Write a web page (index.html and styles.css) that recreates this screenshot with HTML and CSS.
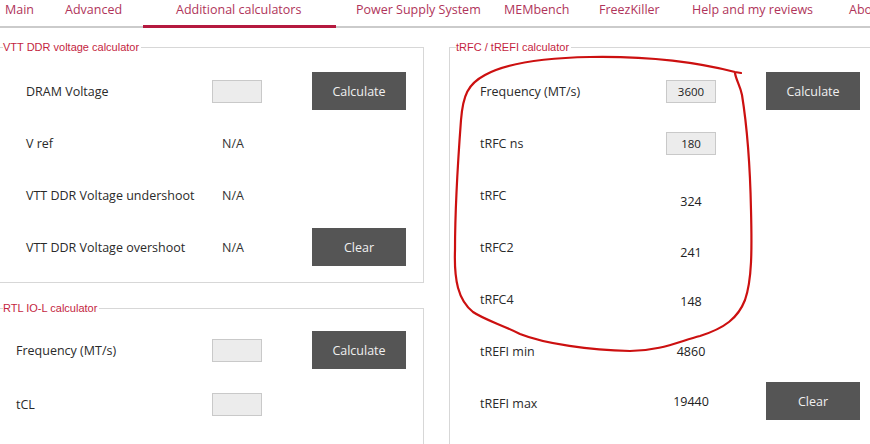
FILE: index.html
```html
<!DOCTYPE html>
<html>
<head>
<meta charset="utf-8">
<link rel="stylesheet" href="styles.css">
</head>
<body>
<nav class="tabs">
  <span class="tab t-main">Main</span>
  <span class="tab t-adv">Advanced</span>
  <span class="tab t-add active">Additional calculators</span>
  <span class="tab t-pss">Power Supply System</span>
  <span class="tab t-mem">MEMbench</span>
  <span class="tab t-frz">FreezKiller</span>
  <span class="tab t-help">Help and my reviews</span>
  <span class="tab t-about">About</span>
</nav>
<main class="content">
  <div class="col left">
    <fieldset class="group vtt">
      <legend>VTT DDR voltage calculator</legend>
      <div class="rows">
        <div class="row">
          <span class="label">DRAM Voltage</span>
          <span class="input"></span>
          <span></span>
          <button class="btn">Calculate</button>
        </div>
        <div class="row">
          <span class="label">V ref</span>
          <span class="na">N/A</span>
          <span></span><span></span>
        </div>
        <div class="row">
          <span class="label">VTT DDR Voltage undershoot</span>
          <span class="na">N/A</span>
          <span></span><span></span>
        </div>
        <div class="row">
          <span class="label">VTT DDR Voltage overshoot</span>
          <span class="na">N/A</span>
          <span></span>
          <button class="btn">Clear</button>
        </div>
      </div>
    </fieldset>
    <fieldset class="group rtl">
      <legend>RTL IO-L calculator</legend>
      <div class="rows">
        <div class="row">
          <span class="label">Frequency (MT/s)</span>
          <span class="input"></span>
          <span></span>
          <button class="btn">Calculate</button>
        </div>
        <div class="row">
          <span class="label">tCL</span>
          <span class="input"></span>
          <span></span><span></span>
        </div>
      </div>
    </fieldset>
  </div>
  <div class="col right">
    <fieldset class="group trfc">
      <legend>tRFC / tREFI calculator</legend>
      <div class="rows">
        <div class="row">
          <span class="label">Frequency (MT/s)</span>
          <span class="input">3600</span>
          <span></span>
          <button class="btn">Calculate</button>
        </div>
        <div class="row">
          <span class="label">tRFC ns</span>
          <span class="input">180</span>
          <span></span><span></span>
        </div>
        <div class="row">
          <span class="label">tRFC</span>
          <span class="val down6">324</span>
          <span></span><span></span>
        </div>
        <div class="row">
          <span class="label">tRFC2</span>
          <span class="val down5">241</span>
          <span></span><span></span>
        </div>
        <div class="row">
          <span class="label">tRFC4</span>
          <span class="val down2">148</span>
          <span></span><span></span>
        </div>
        <div class="row">
          <span class="label">tREFI min</span>
          <span class="val">4860</span>
          <span></span><span></span>
        </div>
        <div class="row">
          <span class="label">tREFI max</span>
          <span class="val up2">19440</span>
          <span></span>
          <button class="btn">Clear</button>
        </div>
      </div>
    </fieldset>
  </div>
</main>
<svg class="annot" width="870" height="444" viewBox="0 0 870 444">
  <path d="M741 73 L735 72 C700 63 650 56 590 57 C540 58 505 64 485 75 C468 84 463 95 461 120 C458 160 455 200 455 250 C454 280 458 300 473 312 C485 320 500 324 520 334 C545 344 590 350 630 351 C660 351 680 341 700 336 C725 328 738 318 745 300 C752 280 752 250 751 210 C750 160 746 120 742 95 C740 85 736 80 735 73" fill="none" stroke="#cc1010" stroke-width="2.2" stroke-linecap="round" stroke-linejoin="round"/>
</svg>
</body>
</html>
```

FILE: styles.css
```css
html, body {
  margin: 0;
  padding: 0;
  background: #ffffff;
  width: 870px;
  height: 444px;
  overflow: hidden;
  font-family: "Open Sans", "Noto Sans", sans-serif;
  color: #222222;
}

.tabs {
  display: flex;
  height: 26px;
  border-bottom: 2px solid #cbcbcb;
  white-space: nowrap;
}

.tab {
  box-sizing: border-box;
  font-size: 12.5px;
  line-height: 20px;
  color: #b0345a;
  padding-left: 15px;
  flex: none;
}

.t-main { width: 50px; padding-left: 5px; }
.t-adv { width: 93px; }
.t-add { width: 193px; padding-left: 33px; }
.t-pss { width: 153px; padding-left: 20px; }
.t-mem { width: 95px; }
.t-frz { width: 93px; }
.t-help { width: 157px; }
.t-about { width: 60px; }

.tab.active {
  border-bottom: 3px solid #b5193f;
  margin-bottom: -2px;
  height: 28px;
}

.content {
  display: flex;
  gap: 25px;
}

.col.left {
  width: 424px;
  flex: none;
}

.col.right {
  width: 440px;
  flex: none;
}

.group {
  margin: 11px 0 0 0;
  padding: 10px 0 8px 0;
  border: 1px solid #d7d7d7;
  min-width: 0;
}

.group legend {
  font-family: "Liberation Sans", Arial, sans-serif;
  font-size: 11px;
  line-height: 16px;
  color: #c41f3f;
  padding: 0 2px 0 0;
}

.group.vtt {
  border-left: none;
  padding-left: 26px;
  height: 224px;
}

.group.vtt legend { margin-left: -23px; }

.group.rtl {
  border-left: none;
  margin-top: 17px;
  padding-left: 16px;
  padding-top: 7px;
  height: 200px;
}

.group.rtl legend { margin-left: -13px; }

.group.trfc {
  border-right: none;
  padding-left: 30px;
  height: 420px;
}

.group.trfc legend { margin-left: -24px; }

.rows {
  display: flex;
  flex-direction: column;
}

.row {
  display: grid;
  grid-template-columns: 186px 50px 50px 94px;
  align-items: center;
  height: 52px;
}

.group.rtl .row {
  grid-template-columns: 196px 50px 50px 94px;
  height: 54px;
}

.label {
  font-size: 12.5px;
  white-space: nowrap;
  color: #2a2a2a;
}

.input {
  box-sizing: border-box;
  height: 23px;
  background: #ececec;
  border: 1px solid #c9c9c9;
  font-size: 11.5px;
  line-height: 21px;
  text-align: center;
  color: #222222;
}

.na {
  font-size: 12.5px;
  padding-left: 10px;
  color: #333333;
}

.val {
  font-size: 12.5px;
  text-align: center;
  color: #222222;
}

.val.down6 { padding-top: 12px; }
.val.down5 { padding-top: 10px; }
.val.down2 { padding-top: 4px; }
.val.up2 { padding-bottom: 4px; }

.group.trfc .row:last-child .btn { margin-top: -4px; }

.btn {
  width: 94px;
  height: 38px;
  border: none;
  background: #555555;
  color: #f0f0f0;
  font-family: "Open Sans", "Noto Sans", sans-serif;
  font-size: 12.5px;
  padding: 0;
}

.annot {
  position: absolute;
  top: 0;
  left: 0;
  pointer-events: none;
}
```
